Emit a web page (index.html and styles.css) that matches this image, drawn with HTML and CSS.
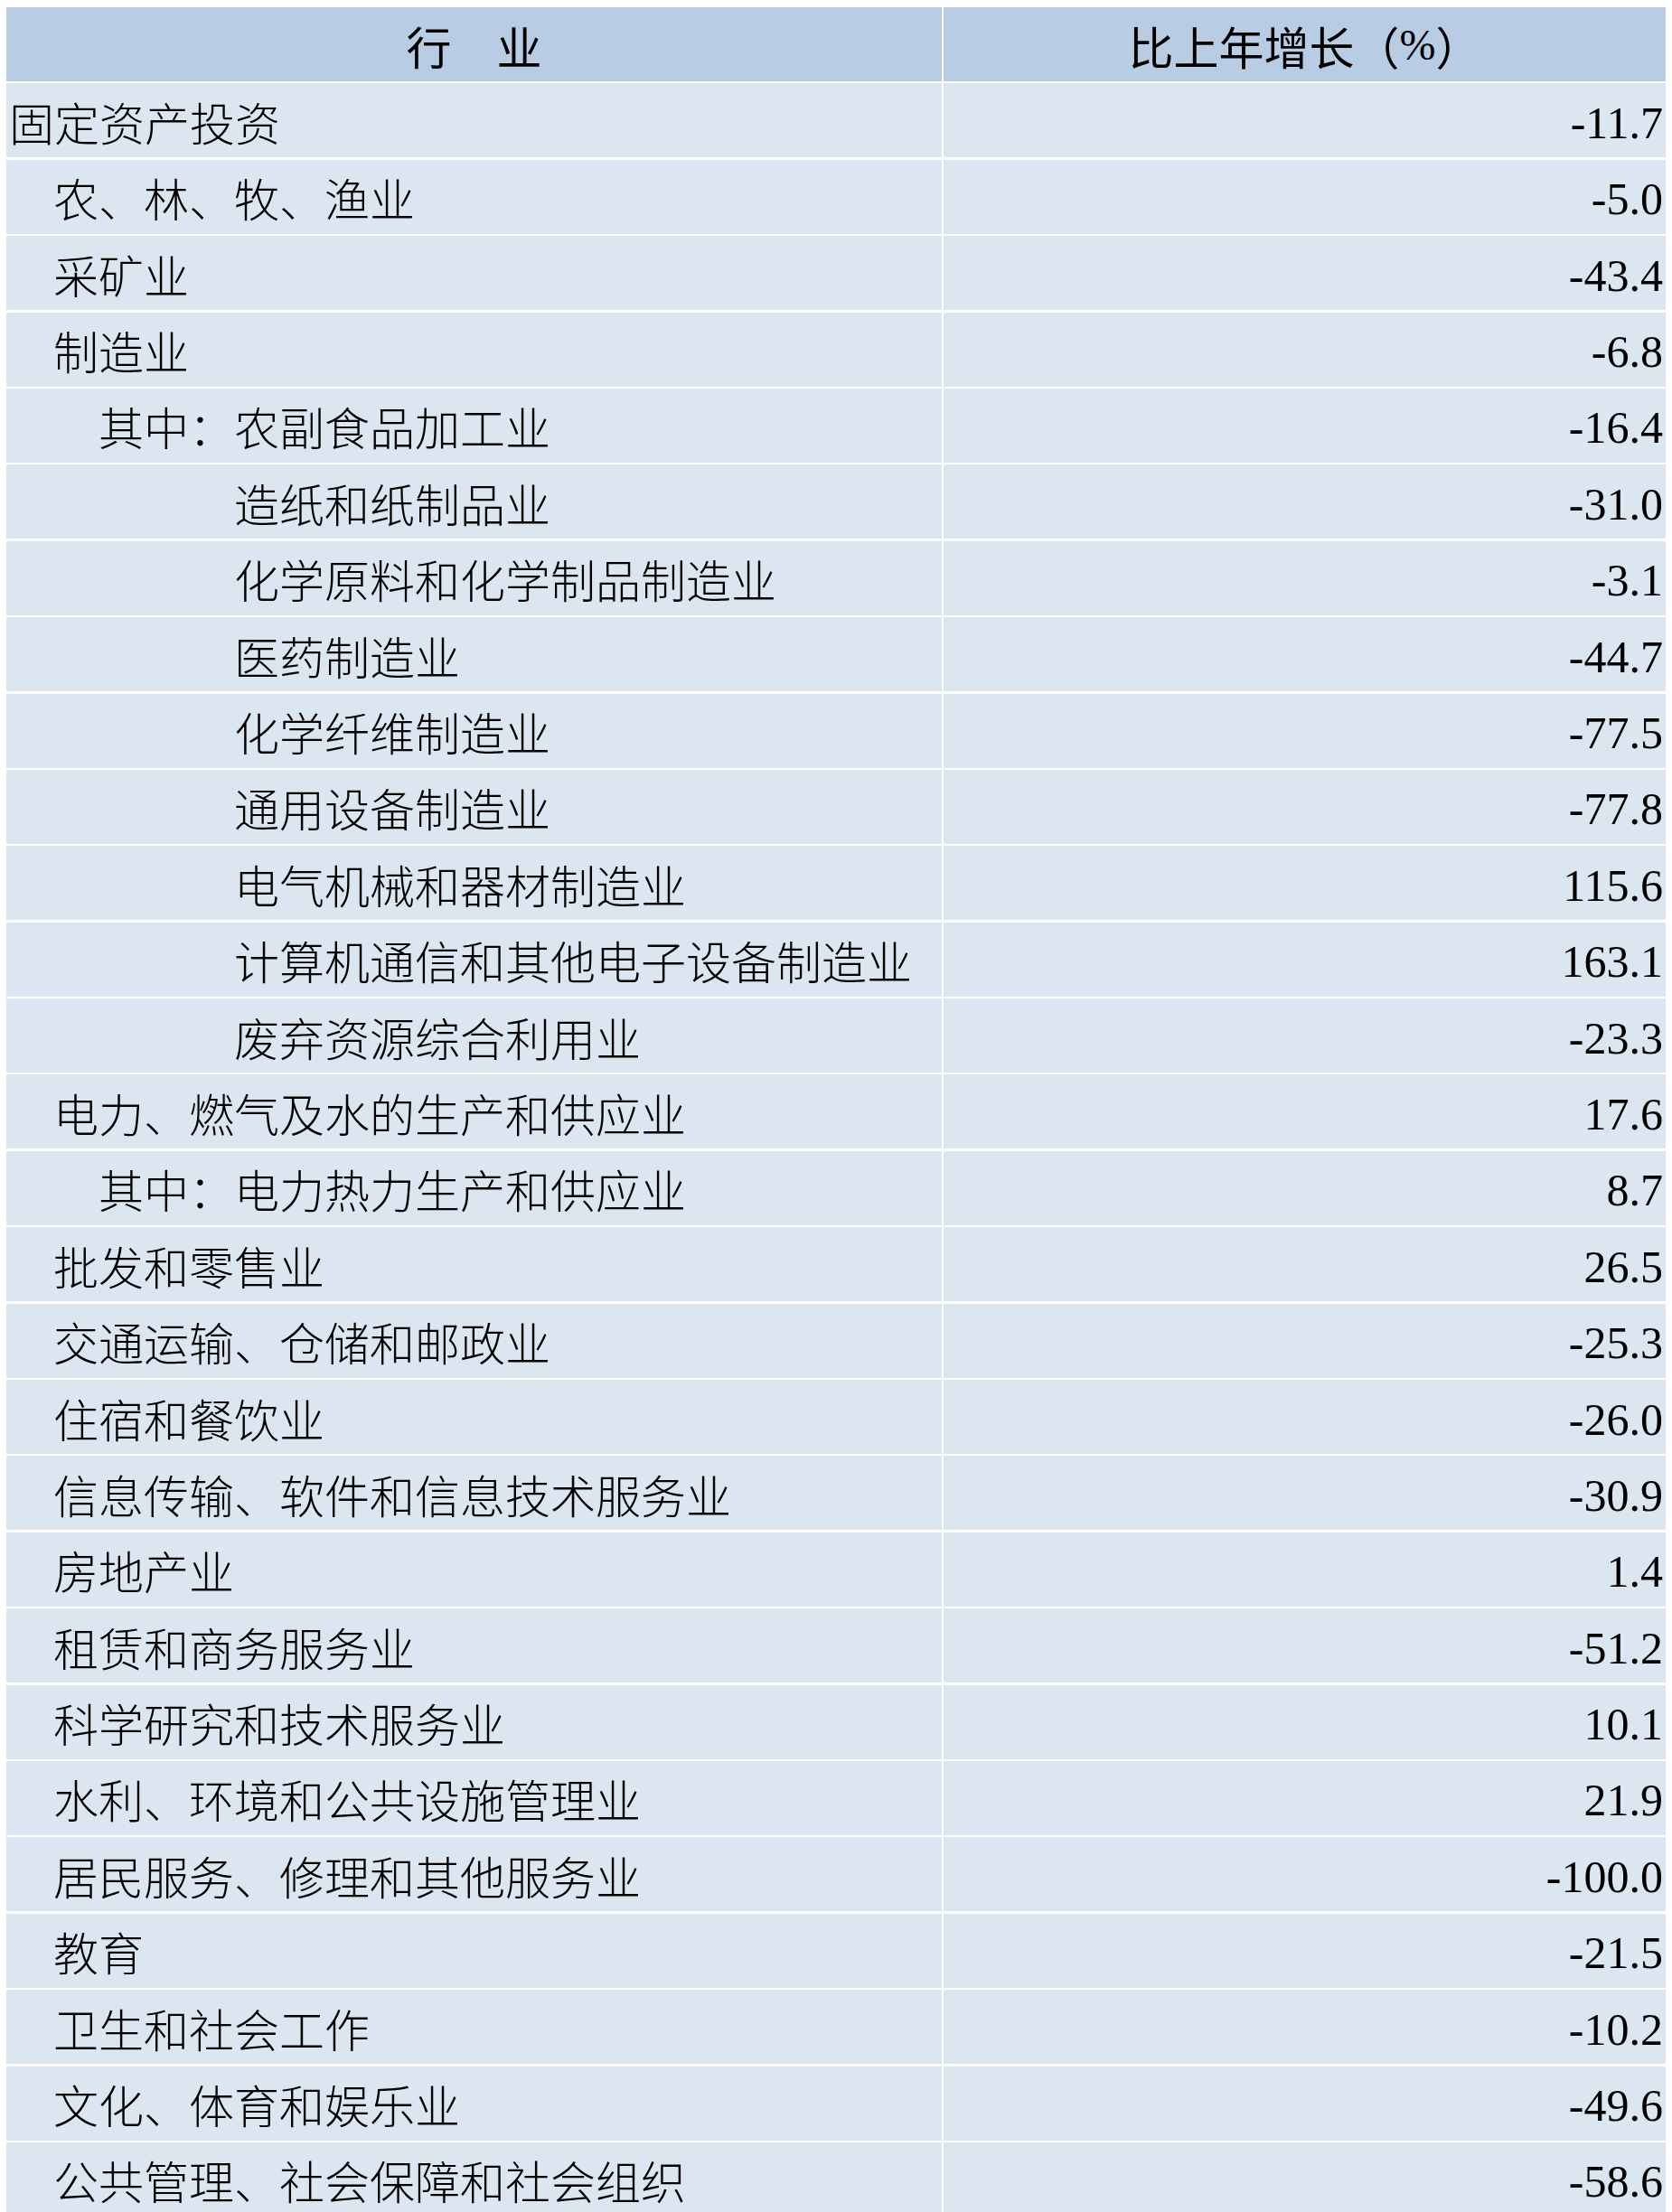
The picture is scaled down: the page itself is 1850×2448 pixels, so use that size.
FILE: index.html
```html
<!DOCTYPE html>
<html lang="zh-CN">
<head>
<meta charset="utf-8">
<title>固定资产投资</title>
<link rel="stylesheet" href="styles.css">
</head>
<body>
<div class="page">
  <div class="table">
    <div class="cell head">行　业</div>
    <div class="cell head">比上年增长（<span class="pct">%</span>）</div>

    <div class="cell name">固定资产投资</div><div class="cell val">-11.7</div>
    <div class="cell name l1">农、林、牧、渔业</div><div class="cell val">-5.0</div>
    <div class="cell name l1">采矿业</div><div class="cell val">-43.4</div>
    <div class="cell name l1">制造业</div><div class="cell val">-6.8</div>
    <div class="cell name l2">其中：农副食品加工业</div><div class="cell val">-16.4</div>
    <div class="cell name l3">造纸和纸制品业</div><div class="cell val">-31.0</div>
    <div class="cell name l3">化学原料和化学制品制造业</div><div class="cell val">-3.1</div>
    <div class="cell name l3">医药制造业</div><div class="cell val">-44.7</div>
    <div class="cell name l3">化学纤维制造业</div><div class="cell val">-77.5</div>
    <div class="cell name l3">通用设备制造业</div><div class="cell val">-77.8</div>
    <div class="cell name l3">电气机械和器材制造业</div><div class="cell val">115.6</div>
    <div class="cell name l3">计算机通信和其他电子设备制造业</div><div class="cell val">163.1</div>
    <div class="cell name l3">废弃资源综合利用业</div><div class="cell val">-23.3</div>
    <div class="cell name l1">电力、燃气及水的生产和供应业</div><div class="cell val">17.6</div>
    <div class="cell name l2">其中：电力热力生产和供应业</div><div class="cell val">8.7</div>
    <div class="cell name l1">批发和零售业</div><div class="cell val">26.5</div>
    <div class="cell name l1">交通运输、仓储和邮政业</div><div class="cell val">-25.3</div>
    <div class="cell name l1">住宿和餐饮业</div><div class="cell val">-26.0</div>
    <div class="cell name l1">信息传输、软件和信息技术服务业</div><div class="cell val">-30.9</div>
    <div class="cell name l1">房地产业</div><div class="cell val">1.4</div>
    <div class="cell name l1">租赁和商务服务业</div><div class="cell val">-51.2</div>
    <div class="cell name l1">科学研究和技术服务业</div><div class="cell val">10.1</div>
    <div class="cell name l1">水利、环境和公共设施管理业</div><div class="cell val">21.9</div>
    <div class="cell name l1">居民服务、修理和其他服务业</div><div class="cell val">-100.0</div>
    <div class="cell name l1">教育</div><div class="cell val">-21.5</div>
    <div class="cell name l1">卫生和社会工作</div><div class="cell val">-10.2</div>
    <div class="cell name l1">文化、体育和娱乐业</div><div class="cell val">-49.6</div>
    <div class="cell name l1">公共管理、社会保障和社会组织</div><div class="cell val">-58.6</div>
  </div>
</div>
</body>
</html>
```

FILE: styles.css
```css
html, body {
  margin: 0;
  padding: 0;
  background: #ffffff;
}

.page {
  padding: 8px 0 0 7px;
}

.table {
  display: grid;
  grid-template-columns: 1035px 799px;
  grid-auto-rows: 82px;
  column-gap: 2px;
  row-gap: 2.4px;
  width: 1836px;
  color: #000000;
}

.cell {
  display: flex;
  align-items: center;
  background: #dce6f1;
  font-size: 50px;
  white-space: nowrap;
  overflow: hidden;
}

.head {
  background: #b8cce4;
  justify-content: center;
  font-family: "Noto Sans CJK SC", "Noto Sans", sans-serif;
  font-weight: 400;
  line-height: 1;
  padding-top: 2px;
}

.pct {
  font-family: "Liberation Serif", "Noto Sans CJK SC", serif;
  font-size: 48px;
}

.name {
  font-family: "Noto Sans CJK SC", "Noto Sans", sans-serif;
  font-weight: 300;
  line-height: 1;
  padding-left: 3px;
  padding-top: 1px;
}

.name.l1 { padding-left: 52px; }
.name.l2 { padding-left: 102px; }
.name.l3 { padding-left: 252px; }

.val {
  justify-content: flex-end;
  font-family: "Liberation Serif", "Times New Roman", serif;
  line-height: 1;
  padding-right: 3px;
  padding-top: 5px;
}
```
